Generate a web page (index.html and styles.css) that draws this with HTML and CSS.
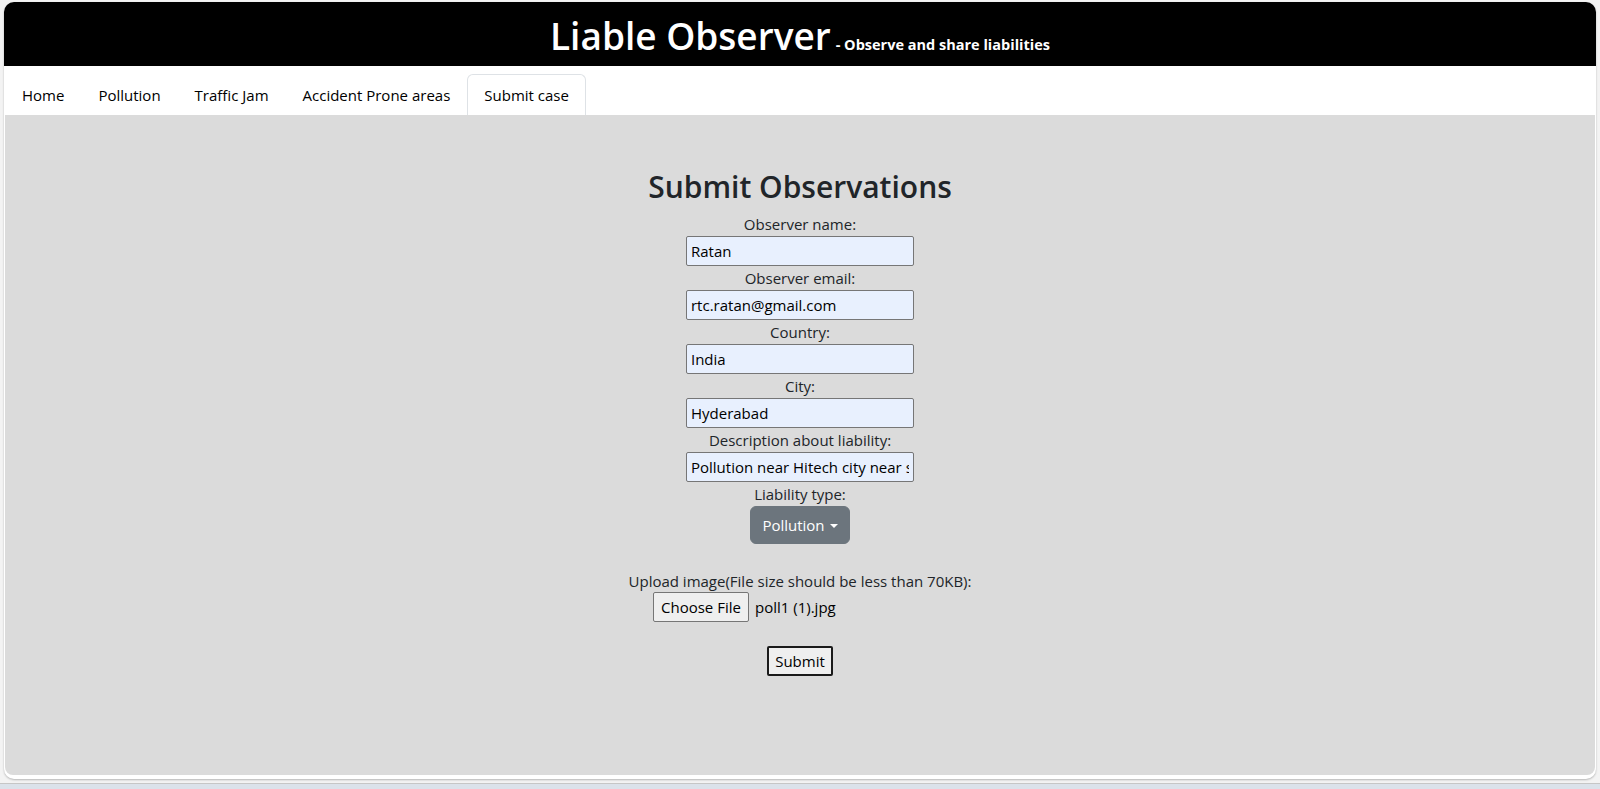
FILE: index.html
```html
<!DOCTYPE html>
<html lang="en">
<head>
<meta charset="utf-8">
<title>Liable Observer</title>
<link rel="stylesheet" href="styles.css">
</head>
<body>
<div class="page">
  <header class="header">
    <h1 class="title">Liable Observer</h1>
    <span class="tagline">- Observe and share liabilities</span>
  </header>
  <nav class="tabs">
    <a class="tab">Home</a>
    <a class="tab">Pollution</a>
    <a class="tab">Traffic Jam</a>
    <a class="tab">Accident Prone areas</a>
    <a class="tab active">Submit case</a>
  </nav>
  <main class="content">
    <h2 class="heading">Submit Observations</h2>
    <form class="form">
      <label class="label">Observer name:</label>
      <input class="field" type="text" value="Ratan">
      <label class="label">Observer email:</label>
      <input class="field" type="text" value="rtc.ratan@gmail.com">
      <label class="label">Country:</label>
      <input class="field" type="text" value="India">
      <label class="label">City:</label>
      <input class="field" type="text" value="Hyderabad">
      <label class="label">Description about liability:</label>
      <input class="field" type="text" value="Pollution near Hitech city near shilparamam">
      <label class="label">Liability type:</label>
      <button class="dropdown" type="button">Pollution</button>
      <label class="label upload-label">Upload image(File size should be less than 70KB):</label>
      <div class="file">
        <span class="file-btn">Choose File</span>
        <span class="file-name">poll1 (1).jpg</span>
      </div>
      <button class="submit" type="button">Submit</button>
    </form>
  </main>
</div>
<div class="taskbar"></div>
</body>
</html>
```

FILE: styles.css
```css
* { box-sizing: border-box; }

html, body {
  margin: 0;
  height: 789px;
  overflow: hidden;
}

body {
  background: #f3f3f3;
  font-family: "Open Sans", "Noto Sans", sans-serif;
  font-size: 15px;
  color: #212529;
}

.page {
  margin: 2px 4px 0;
  height: 777px;
  background: #ffffff;
  border-radius: 10px;
  box-shadow: 0 1px 2px rgba(0, 0, 0, 0.25);
  padding-bottom: 4px;
  display: flex;
  flex-direction: column;
}

.header {
  height: 64px;
  background: #000;
  border-radius: 10px 10px 0 0;
  display: flex;
  justify-content: center;
  align-items: baseline;
  padding-top: 11px;
  color: #fff;
}

.title {
  margin: 0;
  font-size: 37px;
  font-weight: 600;
  line-height: 46px;
}

.tagline {
  margin-left: 5px;
  font-size: 14.5px;
  font-weight: 700;
}

.tabs {
  height: 49px;
  padding: 8px 0 0 1px;
  display: flex;
  align-items: flex-start;
}

.tab {
  display: block;
  padding: 8px 16px;
  line-height: 24px;
  border: 1px solid transparent;
  border-radius: 6px 6px 0 0;
  color: #000;
  height: 42px;
}

.tab.active {
  border-color: #dee2e6 #dee2e6 transparent;
  background: #fff;
}

.content {
  flex: 1;
  background: #dbdbdb;
  border-radius: 0 0 8px 8px;
  margin: 0 1px;
  padding-top: 53px;
  display: flex;
  flex-direction: column;
  align-items: center;
}

.heading {
  margin: 0 0 6px;
  font-size: 30px;
  font-weight: 600;
  line-height: 38px;
}

.form {
  display: flex;
  flex-direction: column;
  align-items: center;
}

.label {
  display: block;
  line-height: 24px;
  height: 24px;
}

.field {
  width: 228px;
  height: 30px;
  border: 1px solid #767676;
  border-radius: 2px;
  background: #e8f0fe;
  font-family: inherit;
  font-size: 15px;
  color: #000;
  padding: 0 4px;
}

.dropdown {
  width: 100px;
  height: 38px;
  border: 1px solid #6c757d;
  border-radius: 6px;
  background: #6c757d;
  color: #fff;
  font-family: inherit;
  font-size: 15px;
  padding: 0;
  white-space: nowrap;
}

.dropdown::after {
  content: "";
  display: inline-block;
  margin-left: 5px;
  vertical-align: 3px;
  border-top: 4.5px solid #fff;
  border-left: 4.5px solid transparent;
  border-right: 4.5px solid transparent;
}

.upload-label {
  margin-top: 25px;
}

.file {
  width: 294px;
  height: 30px;
  display: flex;
  align-items: center;
  margin-top: -1px;
}

.file-btn {
  height: 30px;
  width: 96px;
  border: 1px solid #767676;
  border-radius: 2px;
  background: #efefef;
  color: #000;
  display: flex;
  align-items: center;
  justify-content: center;
}

.file-name {
  margin-left: 6px;
  color: #000;
}

.submit {
  margin-top: 24px;
  width: 66px;
  height: 30px;
  border: 2px solid #1a1a1a;
  border-radius: 2px;
  background: #efefef;
  color: #000;
  font-family: inherit;
  font-size: 15px;
  padding: 0;
}

.taskbar {
  margin-top: 4px;
  height: 6px;
  background: #dbe2ea;
  border-top: 1px solid #c6c6c6;
}
```
